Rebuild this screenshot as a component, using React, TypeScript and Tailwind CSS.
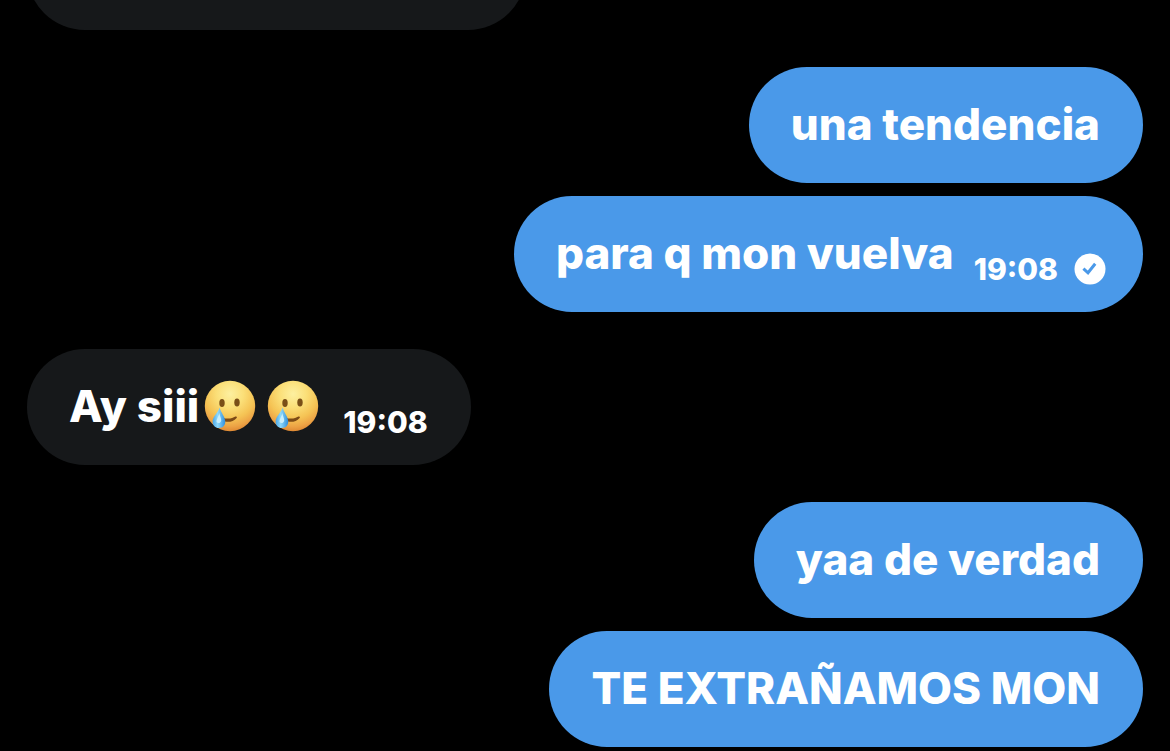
import React from 'react';

interface Message {
  id: number;
  text: string;
  time?: string;
  sent?: boolean;
}

interface MessageGroup {
  id: number;
  mine: boolean;
  messages: Message[];
}

const groups: MessageGroup[] = [
  {
    id: 1,
    mine: true,
    messages: [
      { id: 1, text: 'una tendencia' },
      { id: 2, text: 'para q mon vuelva', time: '19:08', sent: true },
    ],
  },
  {
    id: 2,
    mine: false,
    messages: [{ id: 3, text: 'Ay siii🥲🥲', time: '19:08' }],
  },
  {
    id: 3,
    mine: true,
    messages: [
      { id: 4, text: 'yaa de verdad' },
      { id: 5, text: 'TE EXTRAÑAMOS MON' },
    ],
  },
];

function TearSmile({ id }: { id: string }) {
  return (
    <svg className="size-[52px] shrink-0" viewBox="0 0 52 52" role="img" aria-label="Smiling face with tear">
      <defs>
        <radialGradient id={`${id}-face`} cx="50%" cy="26%" r="76%">
          <stop offset="0" stopColor="#fdf0a0" />
          <stop offset="0.35" stopColor="#fbdf78" />
          <stop offset="0.65" stopColor="#f5c354" />
          <stop offset="0.85" stopColor="#eda345" />
          <stop offset="1" stopColor="#dd8430" />
        </radialGradient>
        <linearGradient id={`${id}-tear`} x1="0" y1="0" x2="1" y2="0">
          <stop offset="0" stopColor="#4aa5e6" />
          <stop offset="0.4" stopColor="#8fd9fa" />
          <stop offset="1" stopColor="#2f8fdd" />
        </linearGradient>
      </defs>
      <circle cx="26" cy="26" r="25.2" fill={`url(#${id}-face)`} />
      <ellipse cx="18" cy="23" rx="2.7" ry="4" fill="#7a4f17" />
      <ellipse cx="33" cy="22.5" rx="2.7" ry="4" fill="#7a4f17" />
      <path d="M18 37.4C23 39.4 28 38.8 31.4 36.6C32.6 36 33.4 37 32.6 38C29 42.4 22.5 42.8 18 40.4Z" fill="#7c4a16" />
      <path
        d="M15.6 27.5C14 33 8.6 36.5 8.6 41.5C8.6 45.5 11.2 48 15 48C19 48 21.6 45.2 21.2 41C20.7 36 17 33 15.6 27.5Z"
        fill={`url(#${id}-tear)`}
      />
      <path d="M15.2 33C14.6 37 12.2 39 12.6 42C14 44 17 43 17.2 40.5C17.2 38 15.8 36 15.2 33Z" fill="#c9effd" />
    </svg>
  );
}

function SentIcon() {
  return (
    <svg className="size-8 shrink-0" viewBox="0 0 32 32" role="img" aria-label="Sent">
      <circle cx="16" cy="16" r="15.5" fill="#fff" />
      <path d="M9.4 15.6l4.6 4.2 7.2-9" fill="none" stroke="#4a99e9" strokeWidth="3" />
    </svg>
  );
}

function MessageText({ message }: { message: Message }) {
  const [text, ...emojis] = message.text.split('🥲');

  return (
    <div className="flex items-center gap-[5px] whitespace-pre text-[44px] leading-[60px]">
      <p>{text}</p>
      {emojis.length > 0 && (
        <div className="flex gap-[11px]">
          {emojis.map((_, index) => (
            <TearSmile key={index} id={`m${message.id}-${index}`} />
          ))}
        </div>
      )}
    </div>
  );
}

function Bubble({ message, mine }: { message: Message; mine: boolean }) {
  return (
    <div
      className={`flex min-h-[116px] items-center rounded-[58px] pb-0.5 pl-[42px] ${
        message.sent ? 'pr-[37px]' : 'pr-[43px]'
      } ${mine ? 'bg-[#4a99e9]' : 'bg-[#16181a]'}`}
    >
      <MessageText message={message} />
      {message.time && (
        <div className={`mt-8 flex items-center gap-4 text-[30px] leading-8 ${mine ? 'ml-5' : 'ml-6'}`}>
          <time>{message.time}</time>
          {message.sent && <SentIcon />}
        </div>
      )}
    </div>
  );
}

export default function App() {
  return (
    <main className="flex h-screen flex-col gap-[37px] overflow-hidden bg-black px-[27px] font-['Inter',sans-serif] font-extrabold text-white">
      {/* Tail end of the earlier message, scrolled mostly out of view */}
      <div className="flex h-[30px] shrink-0 items-end overflow-hidden">
        <div className="h-[116px] w-full max-w-[499px] shrink-0 rounded-[58px] bg-[#16181a]" />
      </div>
      {groups.map((group) => (
        <section
          key={group.id}
          className={`flex shrink-0 flex-col gap-[13px] ${group.mine ? 'items-end' : 'items-start'}`}
        >
          {group.messages.map((message) => (
            <Bubble key={message.id} message={message} mine={group.mine} />
          ))}
        </section>
      ))}
    </main>
  );
}
